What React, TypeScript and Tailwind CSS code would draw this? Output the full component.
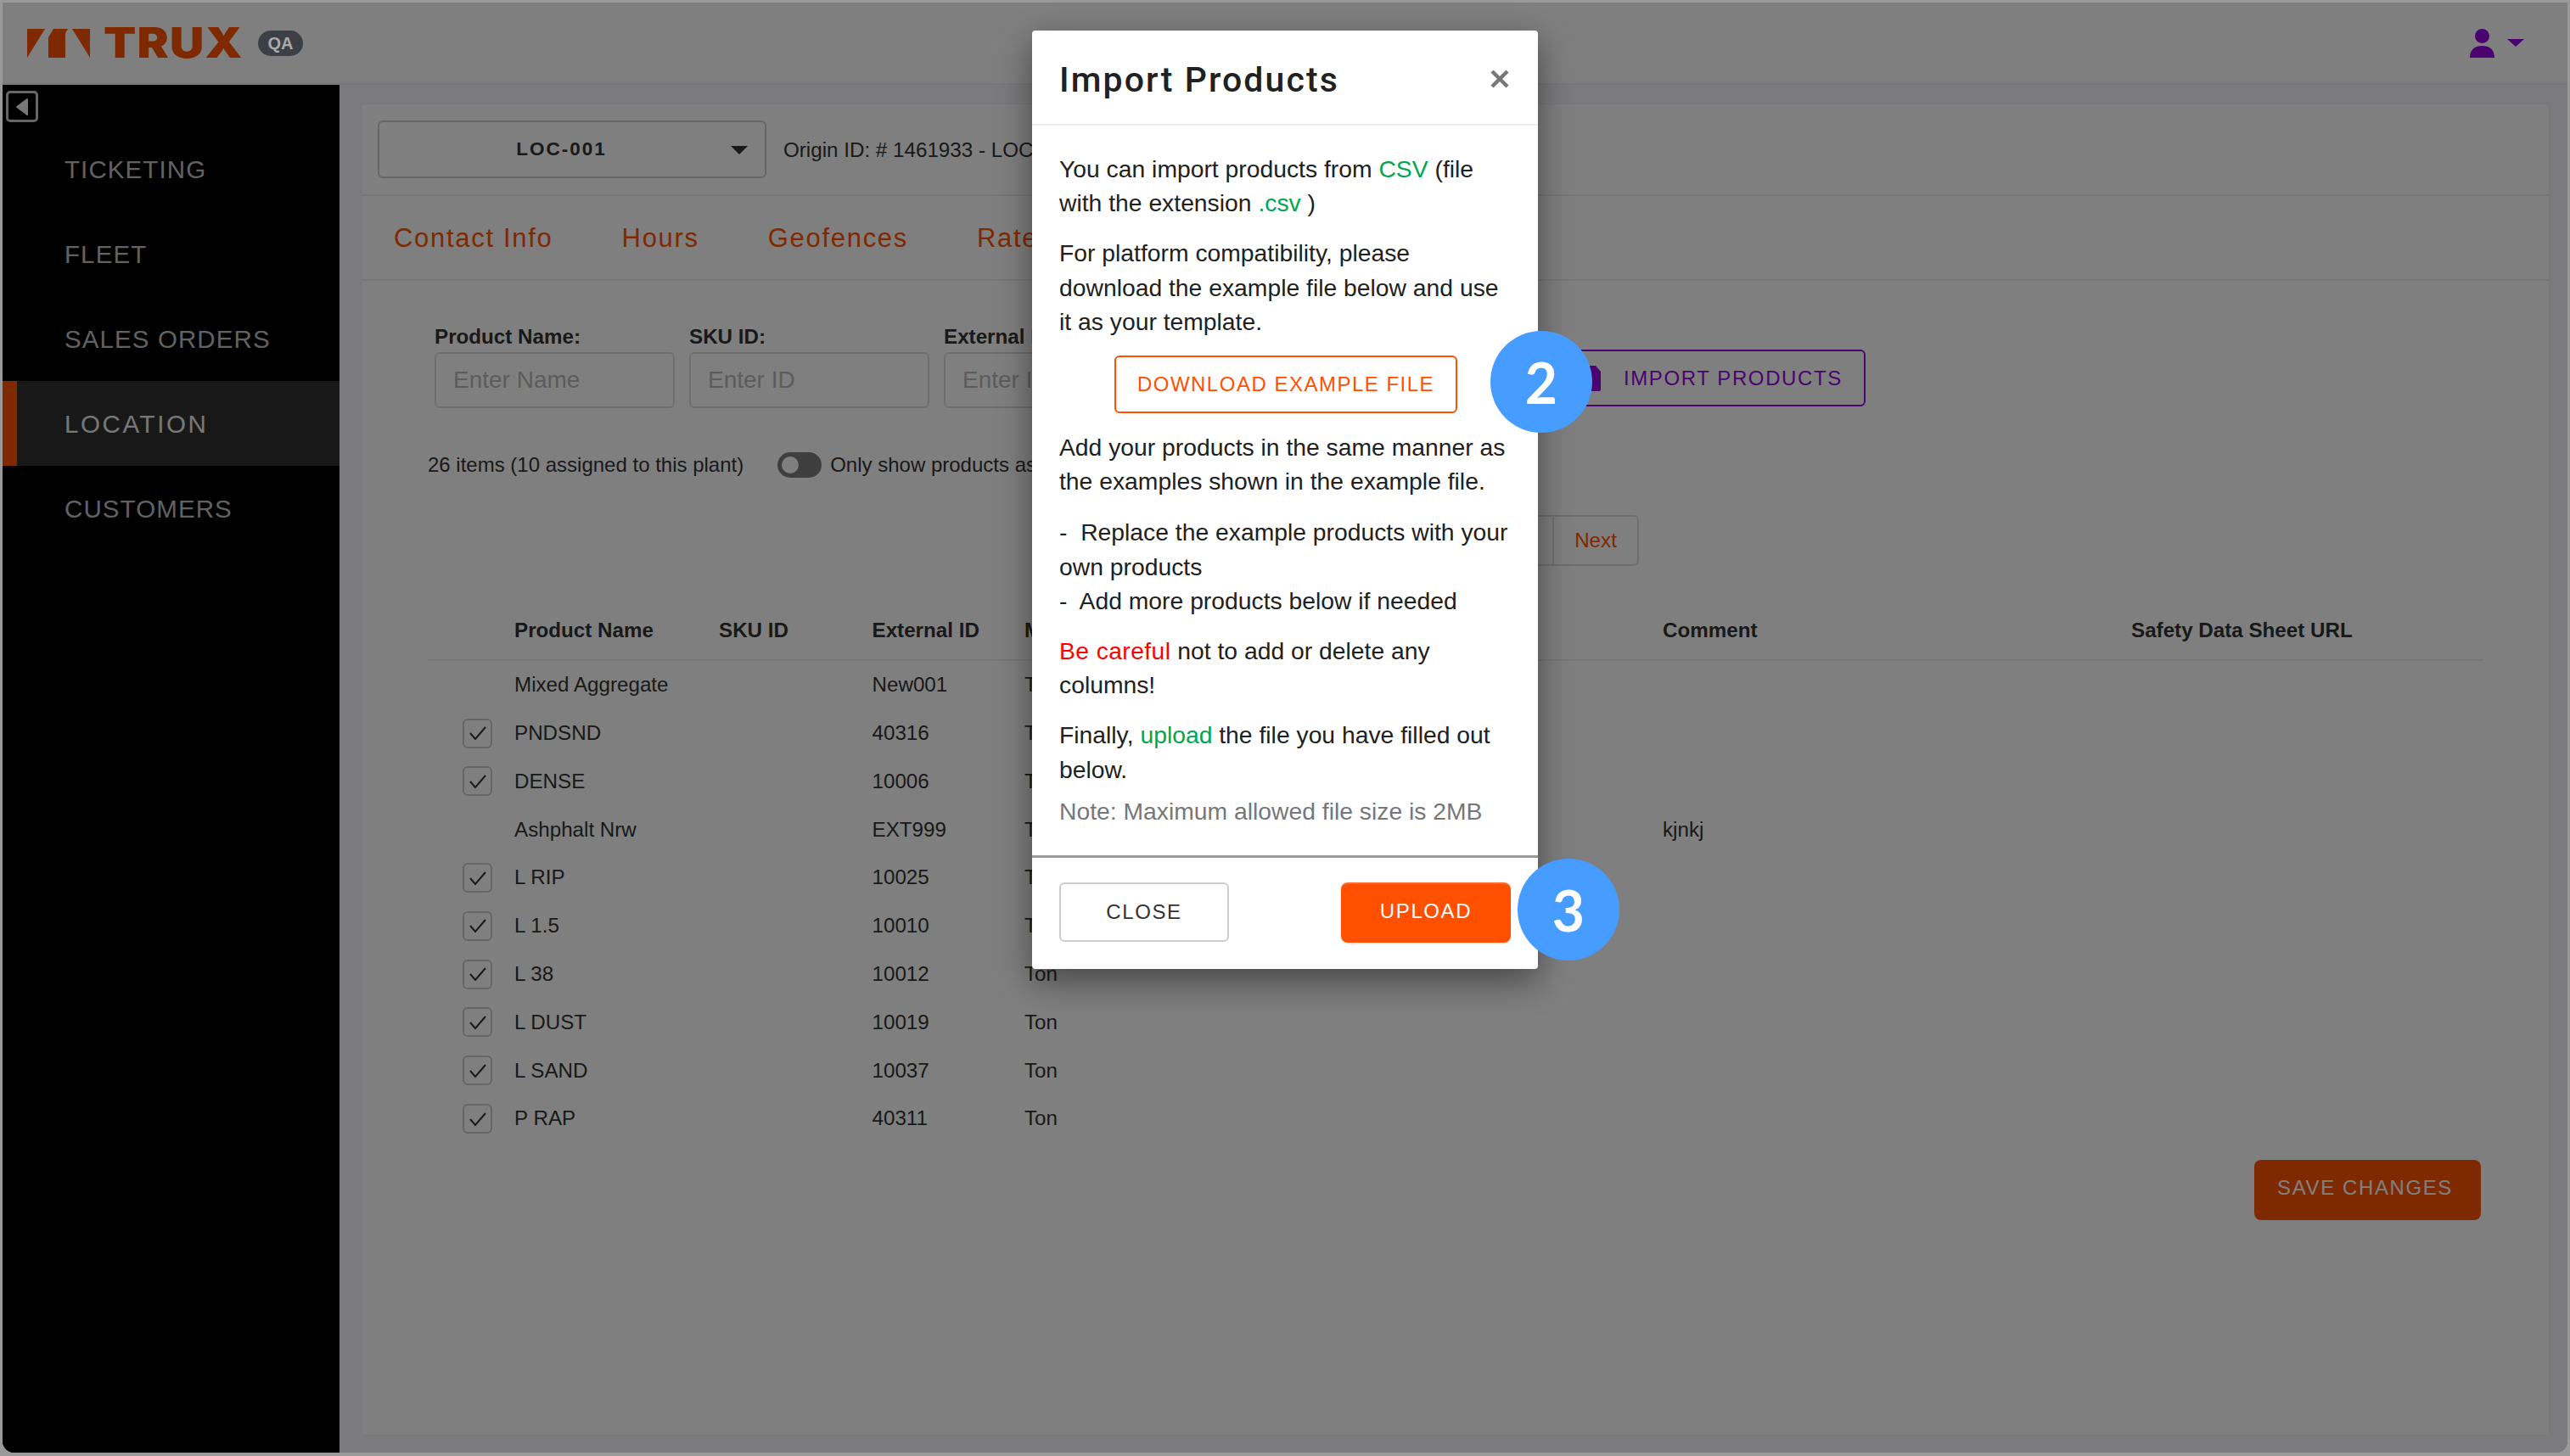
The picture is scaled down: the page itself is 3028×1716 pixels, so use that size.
const navItems = ['TICKETING', 'FLEET', 'SALES ORDERS', 'LOCATION', 'CUSTOMERS']
const tabs = ['Contact Info', 'Hours', 'Geofences', 'Rates']

const products = [
  { name: 'Mixed Aggregate', ext: 'New001', assigned: false, comment: '' },
  { name: 'PNDSND', ext: '40316', assigned: true, comment: '' },
  { name: 'DENSE', ext: '10006', assigned: true, comment: '' },
  { name: 'Ashphalt Nrw', ext: 'EXT999', assigned: false, comment: 'kjnkj' },
  { name: 'L RIP', ext: '10025', assigned: true, comment: '' },
  { name: 'L 1.5', ext: '10010', assigned: true, comment: '' },
  { name: 'L 38', ext: '10012', assigned: true, comment: '' },
  { name: 'L DUST', ext: '10019', assigned: true, comment: '' },
  { name: 'L SAND', ext: '10037', assigned: true, comment: '' },
  { name: 'P RAP', ext: '40311', assigned: true, comment: '' },
]

const gridCols = 'grid grid-cols-[102px_241px_180.5px_179.5px_752px_552px_1fr]'

function Logo() {
  return (
    <div className="flex items-center">
      <svg width="74" height="34" viewBox="0 0 74 34" className="mt-[1px]">
        <polygon points="0,0 21,0 0,34" fill="#ff5200" />
        <polygon points="25,10 31,0 48,0 45,5 45,34 25,34" fill="#ff5200" />
        <polygon points="53,0 74,0 74,34" fill="#ff5200" />
      </svg>
      <span className="ml-[16px] inline-block w-[162px] origin-left scale-x-[1.14] font-['Inter'] text-[49px] leading-none font-black tracking-[1px] text-[#ff5200]">
        TRUX
      </span>
      <span className="relative z-30 ml-[20px] flex h-[30px] w-[53px] items-center justify-center rounded-full bg-[#3c4046] text-[20px] font-bold text-[#aaa]">
        QA
      </span>
    </div>
  )
}

function FilterField({ label, placeholder }: { label: string; placeholder: string }) {
  return (
    <div className="flex w-[283px] flex-col">
      <label className="h-[33px] text-[24.2px] leading-[30px] font-bold whitespace-nowrap text-[#333]">{label}</label>
      <input
        placeholder={placeholder}
        className="h-[66px] w-full rounded-[6px] border-2 border-[#ddd] px-[20px] text-[28px] placeholder:text-[#b8b8b8]"
      />
    </div>
  )
}

function Checkbox() {
  return (
    <div className="ml-[41px] flex h-[35px] w-[35px] items-center justify-center rounded-[6px] border-2 border-[#ccc]">
      <svg width="22" height="20" viewBox="0 0 22 20" fill="none">
        <polyline points="2,10 8,17 20,3" stroke="#333" strokeWidth="2" />
      </svg>
    </div>
  )
}

function Page() {
  return (
    <div className="flex h-full flex-col">
      <header className="flex h-[97px] shrink-0 items-center justify-between border-b-2 border-[#eee] bg-white pr-[51px] pl-[29px]">
        <Logo />
        <div className="flex items-center gap-[15px]">
          <svg width="29" height="34" viewBox="0 0 29 34">
            <circle cx="14.5" cy="8.5" r="8.5" fill="#9606e0" />
            <path d="M0 34 C0 24 6 20 14.5 20 C23 20 29 24 29 34 Z" fill="#9606e0" />
          </svg>
          <svg width="20" height="9" viewBox="0 0 20 9">
            <polygon points="0,0 20,0 10,9" fill="#9606e0" />
          </svg>
        </div>
      </header>

      <div className="flex min-h-0 flex-1">
        <aside className="w-[397px] shrink-0 bg-black pt-[7px]">
          <div className="ml-[4px] flex h-[37px] w-[38px] items-center justify-center rounded-[5px] border-[3px] border-[#ccc]">
            <svg width="16" height="22" viewBox="0 0 16 22">
              <polygon points="14,2 14,20 2,11" fill="#eee" stroke="#eee" strokeWidth="2" strokeLinejoin="round" />
            </svg>
          </div>
          <nav className="mt-[5px]">
            {navItems.map((item) =>
              item === 'LOCATION' ? (
                <div
                  key={item}
                  className="flex h-[100px] items-center border-l-[17px] border-[#ff5200] bg-[#303030] pt-[2px] pl-[56px] text-[29.5px] tracking-[2.6px] text-[#eee]"
                >
                  {item}
                </div>
              ) : (
                <div
                  key={item}
                  className="flex h-[100px] items-center pt-[2px] pl-[73px] text-[29.5px] tracking-[1.1px] text-[#c4c4c4]"
                >
                  {item}
                </div>
              ),
            )}
          </nav>
        </aside>

        <main className="min-w-0 flex-1 bg-[#f7f7fb] pt-[22px] pr-[21px] pb-[20px] pl-[25px]">
          <div className="flex h-full flex-col rounded-[4px] border border-[#f0f0f0] bg-white">
            <div className="flex h-[108px] shrink-0 items-start gap-[20px] border-b-2 border-[#eee] pt-[19px] pl-[19px]">
              <div className="relative flex h-[68px] w-[458px] items-center justify-center rounded-[6px] border-2 border-[#ccc] pr-[25px] text-[22.5px] font-bold tracking-[2px] text-[#333]">
                LOC-001
                <svg width="20" height="10" viewBox="0 0 20 10" className="absolute top-[28px] right-[20px]">
                  <polygon points="0,0 20,0 10,10" fill="#333" />
                </svg>
              </div>
              <span className="pt-[17px] text-[24.2px] whitespace-nowrap text-[#333]">Origin ID: # 1461933 - LOC-001</span>
            </div>

            <div className="flex h-[100px] shrink-0 items-center gap-[81px] border-b-2 border-[#eee] pt-[2px] pl-[38px] text-[31px] tracking-[1.7px] text-[#ff5200]">
              {tabs.map((tab) => (
                <span key={tab}>{tab}</span>
              ))}
            </div>

            <div className="flex flex-1 flex-col">
              <div className="mt-[51px] flex h-[99px] items-end gap-[17px] pl-[86px]">
                <FilterField label="Product Name:" placeholder="Enter Name" />
                <FilterField label="SKU ID:" placeholder="Enter ID" />
                <FilterField label="External ID:" placeholder="Enter ID" />
                <button className="mb-[2px] ml-[429px] flex h-[67px] w-[357px] items-center gap-[27px] rounded-[6px] border-2 border-[#9606e0] pl-[25px] text-[24px] tracking-[1.6px] text-[#9606e0]">
                  <svg width="18" height="30" viewBox="0 0 18 30">
                    <path d="M2 0 H12 L18 7 V28 Q18 30 16 30 H2 Q0 30 0 28 V2 Q0 0 2 0 Z" fill="#9606e0" />
                  </svg>
                  IMPORT PRODUCTS
                </button>
              </div>

              <div className="mt-[52px] flex h-[30px] items-center pl-[78px] text-[24px] text-[#333]">
                <span>26 items (10 assigned to this plant)</span>
                <div className="mr-[10px] ml-[40px] flex h-[30px] w-[52px] items-center rounded-full bg-[#7c7c7c] pl-[5px]">
                  <div className="h-[20px] w-[20px] rounded-full bg-white" />
                </div>
                <span>Only show products assigned to this plant</span>
              </div>

              <div className="mt-[44px] flex w-[1505px] justify-end">
                <div className="flex h-[60px] items-center rounded-[6px] border-2 border-[#ddd] text-[24.2px] text-[#ff5200]">
                  <span className="flex h-full w-[60px] items-center justify-center border-r-2 border-[#ddd]">1</span>
                  <span className="flex h-full w-[98px] items-center justify-center">Next</span>
                </div>
              </div>

              <div className="mt-[42px] ml-[78px] w-[2422px] text-[24.2px] text-[#333]">
                <div className={`${gridCols} h-[70px] items-center border-b-2 border-[#eee] font-bold`}>
                  <span />
                  <span>Product Name</span>
                  <span>SKU ID</span>
                  <span>External ID</span>
                  <span>Measure</span>
                  <span>Comment</span>
                  <span>Safety Data Sheet URL</span>
                </div>
                {products.map((p) => (
                  <div key={p.name} className={`${gridCols} h-[56.8px] items-center`}>
                    <div>{p.assigned && <Checkbox />}</div>
                    <span>{p.name}</span>
                    <span />
                    <span>{p.ext}</span>
                    <span>Ton</span>
                    <span>{p.comment}</span>
                    <span />
                  </div>
                ))}
              </div>

              <div className="mt-[20px] mr-[80px] flex justify-end">
                <button className="h-[71px] w-[267px] rounded-[8px] bg-[#ff5200] pr-[6px] pb-[4px] text-[24px] tracking-[1.6px] text-white">
                  SAVE CHANGES
                </button>
              </div>
            </div>
          </div>
        </main>
      </div>
    </div>
  )
}

function StepBadge({ n, className }: { n: number; className: string }) {
  return (
    <div
      className={`absolute flex h-[120px] w-[120px] items-center justify-center rounded-full bg-[#479cff] font-['Lato'] text-[66px] font-bold text-white ${className}`}
    >
      {n}
    </div>
  )
}

function ImportModal() {
  return (
    <div className="absolute top-[33px] left-[1213px] flex h-[1106px] w-[596px] flex-col rounded-[4px] bg-white text-[28.3px] leading-[40.2px] text-[#212121] shadow-[0_14px_40px_rgba(0,0,0,0.45)]">
      <div className="flex h-[112px] shrink-0 items-center justify-between border-b-2 border-[#eee] pt-[6px] pr-[33px] pl-[32px]">
        <h2 className="font-['Roboto'] text-[41px] font-medium tracking-[2.1px]">Import Products</h2>
        <svg width="24" height="24" viewBox="0 0 24 24" className="mb-[3px]">
          <path d="M3 3 L21 21 M21 3 L3 21" stroke="#777" strokeWidth="4.5" />
        </svg>
      </div>

      <div className="flex-1 px-[32px] pt-[31px]">
        <p>
          You can import products from <span className="text-[#00a651]">CSV</span> (file
          <br />
          with the extension <span className="text-[#00a651]">.csv</span> )
        </p>
        <p className="mt-[19px]">
          For platform compatibility, please
          <br />
          download the example file below and use
          <br />
          it as your template.
        </p>
        <button className="mt-[20px] ml-[65px] flex h-[68px] w-[404px] items-center justify-center rounded-[6px] border-2 border-[#ff5000] text-[24px] tracking-[1.5px] text-[#ff5000]">
          DOWNLOAD EXAMPLE FILE
        </button>
        <p className="mt-[20px]">
          Add your products in the same manner as
          <br />
          the examples shown in the example file.
        </p>
        <p className="mt-[20px]">
          -&nbsp; Replace the example products with your
          <br />
          own products
          <br />
          -&nbsp; Add more products below if needed
        </p>
        <p className="mt-[18.5px]">
          <span className="tracking-[0.4px] text-[#f00]">Be careful</span> not to add or delete any
          <br />
          columns!
        </p>
        <p className="mt-[19.5px]">
          Finally, <span className="text-[#00a651]">upload</span> the file you have filled out
          <br />
          below.
        </p>
        <p className="mt-[9.5px] text-[#777]">Note: Maximum allowed file size is 2MB</p>
      </div>

      <div className="flex h-[134px] shrink-0 justify-between border-t-[3px] border-[#999] px-[32px] pt-[28px]">
        <button className="mt-[1px] h-[70px] w-[200px] rounded-[6px] border-2 border-[#ccc] text-[24px] tracking-[1.6px] text-[#333]">
          CLOSE
        </button>
        <button className="mt-[1px] h-[71px] w-[200px] rounded-[8px] border-t-2 border-[#ff6a2a] bg-[#ff5000] pb-[4px] text-[24px] tracking-[1.6px] text-white shadow-sm">
          UPLOAD
        </button>
      </div>
    </div>
  )
}

export default function App() {
  return (
    <div className="h-[1716px] w-[3028px] overflow-hidden bg-[#999] pt-[3px] pr-[3px] pb-[4px] pl-[3px] font-['Liberation_Sans',Arial,sans-serif]">
      <div className="relative h-full overflow-hidden rounded-b-[14px] bg-black">
        <Page />
        <div className="absolute inset-0 bg-black/50" />
        <ImportModal />
        <StepBadge n={2} className="top-[387px] left-[1753px]" />
        <StepBadge n={3} className="top-[1009px] left-[1785px]" />
      </div>
    </div>
  )
}
